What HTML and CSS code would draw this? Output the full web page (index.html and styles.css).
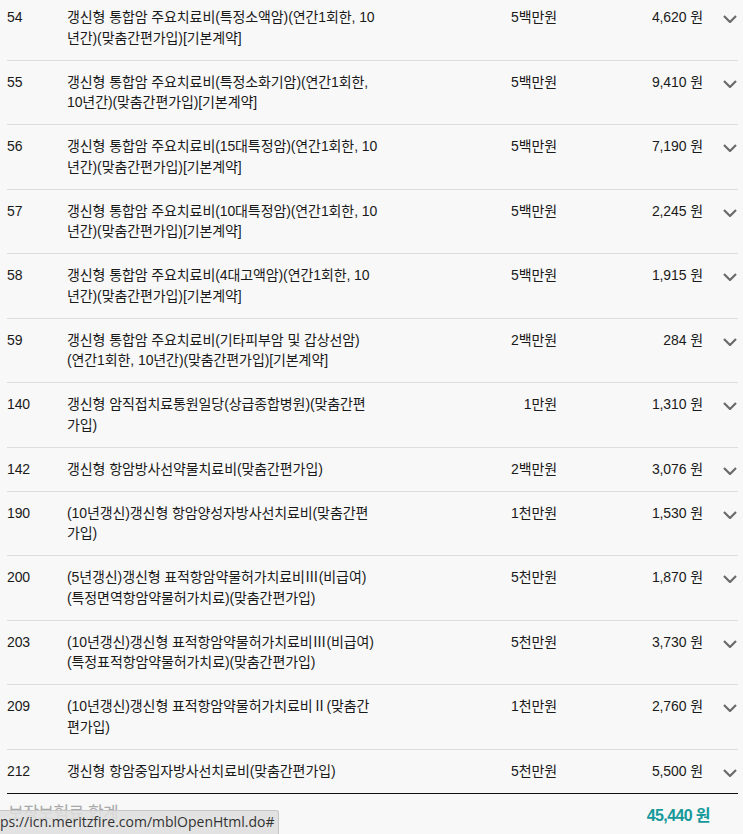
FILE: index.html
```html
<!DOCTYPE html>
<html lang="ko">
<head>
<meta charset="utf-8">
<title>보장내역</title>
<link rel="stylesheet" href="styles.css">
</head>
<body>
<main class="list">
  <div class="row"><span class="no">54</span><span class="name">갱신형 통합암 주요치료비(특정소액암)(연간1회한, 10<br>년간)(맞춤간편가입)[기본계약]</span><span class="amt">5백만원</span><span class="prem">4,620 원</span><span class="chev"><svg viewBox="0 0 14 8" width="14" height="8"><path d="M1 1 L7 7 L13 1"/></svg></span></div>
  <div class="row"><span class="no">55</span><span class="name">갱신형 통합암 주요치료비(특정소화기암)(연간1회한,<br>10년간)(맞춤간편가입)[기본계약]</span><span class="amt">5백만원</span><span class="prem">9,410 원</span><span class="chev"><svg viewBox="0 0 14 8" width="14" height="8"><path d="M1 1 L7 7 L13 1"/></svg></span></div>
  <div class="row"><span class="no">56</span><span class="name">갱신형 통합암 주요치료비(15대특정암)(연간1회한, 10<br>년간)(맞춤간편가입)[기본계약]</span><span class="amt">5백만원</span><span class="prem">7,190 원</span><span class="chev"><svg viewBox="0 0 14 8" width="14" height="8"><path d="M1 1 L7 7 L13 1"/></svg></span></div>
  <div class="row"><span class="no">57</span><span class="name">갱신형 통합암 주요치료비(10대특정암)(연간1회한, 10<br>년간)(맞춤간편가입)[기본계약]</span><span class="amt">5백만원</span><span class="prem">2,245 원</span><span class="chev"><svg viewBox="0 0 14 8" width="14" height="8"><path d="M1 1 L7 7 L13 1"/></svg></span></div>
  <div class="row"><span class="no">58</span><span class="name">갱신형 통합암 주요치료비(4대고액암)(연간1회한, 10<br>년간)(맞춤간편가입)[기본계약]</span><span class="amt">5백만원</span><span class="prem">1,915 원</span><span class="chev"><svg viewBox="0 0 14 8" width="14" height="8"><path d="M1 1 L7 7 L13 1"/></svg></span></div>
  <div class="row"><span class="no">59</span><span class="name">갱신형 통합암 주요치료비(기타피부암 및 갑상선암)<br>(연간1회한, 10년간)(맞춤간편가입)[기본계약]</span><span class="amt">2백만원</span><span class="prem">284 원</span><span class="chev"><svg viewBox="0 0 14 8" width="14" height="8"><path d="M1 1 L7 7 L13 1"/></svg></span></div>
  <div class="row"><span class="no">140</span><span class="name">갱신형 암직접치료통원일당(상급종합병원)(맞춤간편<br>가입)</span><span class="amt">1만원</span><span class="prem">1,310 원</span><span class="chev"><svg viewBox="0 0 14 8" width="14" height="8"><path d="M1 1 L7 7 L13 1"/></svg></span></div>
  <div class="row"><span class="no">142</span><span class="name">갱신형 항암방사선약물치료비(맞춤간편가입)</span><span class="amt">2백만원</span><span class="prem">3,076 원</span><span class="chev"><svg viewBox="0 0 14 8" width="14" height="8"><path d="M1 1 L7 7 L13 1"/></svg></span></div>
  <div class="row"><span class="no">190</span><span class="name">(10년갱신)갱신형 항암양성자방사선치료비(맞춤간편<br>가입)</span><span class="amt">1천만원</span><span class="prem">1,530 원</span><span class="chev"><svg viewBox="0 0 14 8" width="14" height="8"><path d="M1 1 L7 7 L13 1"/></svg></span></div>
  <div class="row"><span class="no">200</span><span class="name">(5년갱신)갱신형 표적항암약물허가치료비Ⅲ(비급여)<br>(특정면역항암약물허가치료)(맞춤간편가입)</span><span class="amt">5천만원</span><span class="prem">1,870 원</span><span class="chev"><svg viewBox="0 0 14 8" width="14" height="8"><path d="M1 1 L7 7 L13 1"/></svg></span></div>
  <div class="row"><span class="no">203</span><span class="name">(10년갱신)갱신형 표적항암약물허가치료비Ⅲ(비급여)<br>(특정표적항암약물허가치료)(맞춤간편가입)</span><span class="amt">5천만원</span><span class="prem">3,730 원</span><span class="chev"><svg viewBox="0 0 14 8" width="14" height="8"><path d="M1 1 L7 7 L13 1"/></svg></span></div>
  <div class="row"><span class="no">209</span><span class="name">(10년갱신)갱신형 표적항암약물허가치료비Ⅱ(맞춤간<br>편가입)</span><span class="amt">1천만원</span><span class="prem">2,760 원</span><span class="chev"><svg viewBox="0 0 14 8" width="14" height="8"><path d="M1 1 L7 7 L13 1"/></svg></span></div>
  <div class="row last"><span class="no">212</span><span class="name">갱신형 항암중입자방사선치료비(맞춤간편가입)</span><span class="amt">5천만원</span><span class="prem">5,500 원</span><span class="chev"><svg viewBox="0 0 14 8" width="14" height="8"><path d="M1 1 L7 7 L13 1"/></svg></span></div>
  <div class="total"><span class="label">보장보험료 합계</span><span class="sum">45,440 원</span></div>
</main>
<div class="status">ps://icn.meritzfire.com/mblOpenHtml.do#</div>
</body>
</html>
```
FILE: styles.css
```css
html, body {
  margin: 0;
  padding: 0;
  background: #f8f8f8;
  overflow: hidden;
}
body {
  height: 834px;
  font-family: "Liberation Sans", "Noto Sans CJK KR", sans-serif;
  color: #1a1a1a;
  font-size: 14px;
}
.list {
  margin: -4px 5px 0 7px;
}
.row {
  display: grid;
  grid-template-columns: 60px 316px 174px 146px 1fr;
  align-items: start;
  padding: 11px 0 11.5px 0;
  line-height: 20.5px;
  border-bottom: 1px solid #dddddd;
  letter-spacing: -0.1px;
}
.row.last {
  border-bottom: 1px solid #111;
}
.name {
  white-space: nowrap;
}
.amt, .prem {
  text-align: right;
  white-space: nowrap;
}
.chev {
  display: flex;
  align-items: flex-start;
  box-sizing: border-box;
  height: 20.5px;
  padding: 8px 0 0 20px;
}
.chev svg {
  display: block;
  fill: none;
  stroke: #6a6a6a;
  stroke-width: 2.2;
}
.total {
  display: flex;
  justify-content: space-between;
  align-items: flex-start;
  padding: 9px 28px 0 1px;
  line-height: 22px;
}
.label {
  font-size: 17px;
  color: #a8a8a8;
  letter-spacing: -0.5px;
}
.sum {
  font-size: 16px;
  font-weight: bold;
  color: #16999b;
  letter-spacing: -0.6px;
  margin-top: 2px;
}
.status {
  position: absolute;
  left: 0;
  top: 810px;
  width: 279px;
  height: 24px;
  box-sizing: border-box;
  background: rgba(222, 222, 222, 0.88);
  border-top: 1px solid #c6c6c6;
  border-right: 1px solid #c6c6c6;
  border-top-right-radius: 3px;
  font-family: "Open Sans", "Liberation Sans", sans-serif;
  font-size: 14px;
  line-height: 22px;
  color: #333;
  white-space: nowrap;
  overflow: hidden;
}
```
